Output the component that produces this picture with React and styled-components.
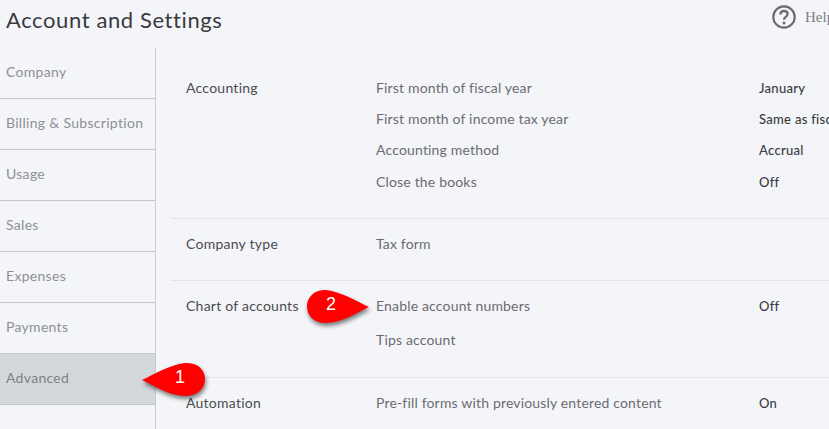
import React from 'react';
import styled, { createGlobalStyle } from 'styled-components';

const GlobalStyle = createGlobalStyle`
    html, body {
        margin: 0;
        padding: 0;
        width: 829px;
        height: 429px;
        overflow: hidden;
        background-color: #f4f5f9;
    }
`;

const Page = styled.div`
    position: relative;
    width: 829px;
    height: 429px;
    overflow: hidden;
    font-family: Lato, "Open Sans", sans-serif;
    color: #393a3d;
`;

const Header = styled.div`
    display: flex;
    justify-content: space-between;
    height: 48px;
    padding-left: 6px;
`;

const Title = styled.h1`
    margin: 6px 0 0 0;
    font-size: 22px;
    line-height: 28px;
    font-weight: 400;
    letter-spacing: 0.6px;
    color: #393a3d;
`;

const Help = styled.div`
    display: flex;
    align-items: flex-start;
    gap: 9px;
    width: 57px;
    flex-shrink: 0;
    padding-top: 5px;
    overflow: hidden;
    font-family: "Liberation Serif", serif;
    font-size: 15px;
    color: #7d7e83;
    white-space: nowrap;

    svg {
        flex-shrink: 0;
    }
`;

const HelpLabel = styled.span`
    line-height: 24px;
`;

const Body = styled.div`
    display: flex;
`;

const Sidebar = styled.nav`
    width: 155px;
    flex-shrink: 0;
    height: 381px;
    border-right: 1px solid #c9cacc;
`;

const SideItem = styled.div`
    box-sizing: border-box;
    height: 51px;
    padding: 15px 0 0 6px;
    font-size: 14px;
    line-height: 18px;
    letter-spacing: 0.3px;
    color: ${props => props.active ? '#808287' : '#8d9096'};
    border-bottom: 1px solid #c4c6c9;
    background-color: ${props => props.active ? '#d4d7dc' : 'transparent'};
    &:last-child {
        border-bottom: ${props => props.active ? '1px solid #c4c6c9' : 'none'};
    }
`;

const Content = styled.main`
    flex: 1;
    padding: 0 0 0 15px;
`;

const Section = styled.section`
    display: flex;
    box-sizing: border-box;
    height: ${props => props.height}px;
    padding: ${props => props.top}px 0 0 15px;
    border-bottom: ${props => props.last ? 'none' : '1px solid #e3e5e9'};
`;

const SectionName = styled.div`
    width: 190px;
    flex-shrink: 0;
    font-size: 14px;
    line-height: 18px;
    letter-spacing: 0.25px;
    color: #4a4b4f;
`;

const Rows = styled.div`
    display: flex;
    flex-direction: column;
    flex: 1;
    min-width: 0;
    gap: ${props => props.gap}px;
`;

const Row = styled.div`
    display: flex;
    height: 18px;
    white-space: nowrap;
`;

const RowLabel = styled.div`
    width: 384px;
    flex-shrink: 0;
    font-size: 14px;
    line-height: 18px;
    letter-spacing: 0.17px;
    color: #6b6c72;
`;

const RowValue = styled.div`
    font-size: 13px;
    line-height: 18px;
    font-weight: 500;
    letter-spacing: 0.3px;
    color: #393a3d;
    margin-left: -1px;
`;

const Callout = styled.div`
    position: absolute;
    left: ${props => props.left}px;
    top: ${props => props.top}px;
    width: 72px;
    height: 44px;
`;

const CalloutNumber = styled.span`
    position: absolute;
    left: ${props => props.left}px;
    top: 9px;
    width: 20px;
    text-align: center;
    font-family: "Liberation Sans", Arial, sans-serif;
    font-size: 18px;
    line-height: 20px;
    color: #ffffff;
`;

const sideItems = ['Company', 'Billing & Subscription', 'Usage', 'Sales', 'Expenses', 'Payments', 'Advanced'];

const sections = [
    {
        name: 'Accounting', height: 171, top: 31, gap: 13.2,
        rows: [
            ['First month of fiscal year', 'January'],
            ['First month of income tax year', 'Same as fiscal year'],
            ['Accounting method', 'Accrual'],
            ['Close the books', 'Off'],
        ],
    },
    { name: 'Company type', height: 62, top: 16, gap: 0, rows: [['Tax form', '']] },
    {
        name: 'Chart of accounts', height: 97, top: 16, gap: 16,
        rows: [
            ['Enable account numbers', 'Off'],
            ['Tips account', ''],
        ],
    },
    {
        name: 'Automation', height: 50, top: 16, gap: 0, last: true,
        rows: [['Pre-fill forms with previously entered content', 'On']],
    },
];

const HelpIcon = () => (
    <svg width="24" height="24" viewBox="0 0 24 24" fill="none">
        <circle cx="12" cy="12" r="10.7" stroke="#6b6c72" strokeWidth="2.2" />
        <path d="M8.4 9.4c0-2.1 1.6-3.4 3.6-3.4 2.1 0 3.6 1.2 3.6 3 0 1.5-.9 2.2-1.9 2.9-1 .6-1.6 1.1-1.6 2.3v.5" stroke="#6b6c72" strokeWidth="2.3" />
        <circle cx="12" cy="18" r="1.5" fill="#6b6c72" />
    </svg>
);

const pointLeft = 'M3 22 C 16 16, 30 7, 46 5 C 60 4, 66 13, 66 21 C 66 31, 58 38, 46 38 C 30 38, 16 28, 3 22 Z';
const pointRight = 'M63 22 C 50 16, 36 7, 20 5 C 8 4, 1 13, 1 21 C 1 31, 8 38, 20 38 C 36 38, 50 28, 63 22 Z';

const Balloon = ({d}) => (
    <svg width="72" height="44" viewBox="0 0 72 44" style={{filter: 'drop-shadow(1px 3px 2px rgba(0,0,0,0.5))', overflow: 'visible'}}>
        <path d={d} fill="#fe0000" />
    </svg>
);

const App = () => (
    <Page>
        <GlobalStyle />
        <Header>
            <Title>Account and Settings</Title>
            <Help>
                <HelpIcon />
                <HelpLabel>Help</HelpLabel>
            </Help>
        </Header>
        <Body>
            <Sidebar>
                {sideItems.map(item => (
                    <SideItem key={item} active={item === 'Advanced'}>{item}</SideItem>
                ))}
            </Sidebar>
            <Content>
                {sections.map(section => (
                    <Section key={section.name} height={section.height} top={section.top} last={section.last}>
                        <SectionName>{section.name}</SectionName>
                        <Rows gap={section.gap}>
                            {section.rows.map(([label, value]) => (
                                <Row key={label}>
                                    <RowLabel>{label}</RowLabel>
                                    <RowValue>{value}</RowValue>
                                </Row>
                            ))}
                        </Rows>
                    </Section>
                ))}
            </Content>
        </Body>
        <Callout left={139} top={358}>
            <Balloon d={pointLeft} />
            <CalloutNumber left={31}>1</CalloutNumber>
        </Callout>
        <Callout left={306} top={285}>
            <Balloon d={pointRight} />
            <CalloutNumber left={15}>2</CalloutNumber>
        </Callout>
    </Page>
);

export default App;
